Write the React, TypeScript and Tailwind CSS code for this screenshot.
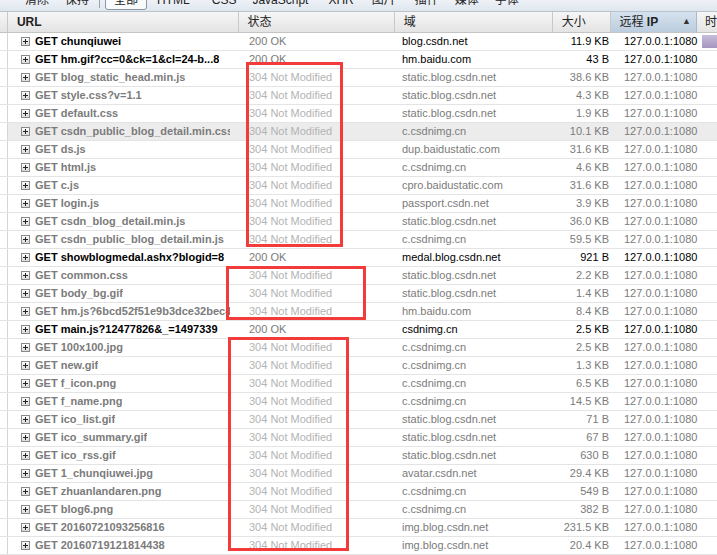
import React from "react"

type Row = { url: string; status: string; domain: string; size: string; cached: boolean; hover?: boolean; bar?: boolean }

const R304 = "304 Not Modified"

const ROWS: Row[] = [
  { url: "GET chunqiuwei", status: "200 OK", domain: "blog.csdn.net", size: "11.9 KB", cached: false, bar: true },
  { url: "GET hm.gif?cc=0&ck=1&cl=24-b...8", status: "200 OK", domain: "hm.baidu.com", size: "43 B", cached: false },
  { url: "GET blog_static_head.min.js", status: R304, domain: "static.blog.csdn.net", size: "38.6 KB", cached: true },
  { url: "GET style.css?v=1.1", status: R304, domain: "static.blog.csdn.net", size: "4.3 KB", cached: true },
  { url: "GET default.css", status: R304, domain: "static.blog.csdn.net", size: "1.9 KB", cached: true },
  { url: "GET csdn_public_blog_detail.min.css", status: R304, domain: "c.csdnimg.cn", size: "10.1 KB", cached: true, hover: true },
  { url: "GET ds.js", status: R304, domain: "dup.baidustatic.com", size: "31.6 KB", cached: true },
  { url: "GET html.js", status: R304, domain: "c.csdnimg.cn", size: "4.6 KB", cached: true },
  { url: "GET c.js", status: R304, domain: "cpro.baidustatic.com", size: "31.6 KB", cached: true },
  { url: "GET login.js", status: R304, domain: "passport.csdn.net", size: "3.9 KB", cached: true },
  { url: "GET csdn_blog_detail.min.js", status: R304, domain: "static.blog.csdn.net", size: "36.0 KB", cached: true },
  { url: "GET csdn_public_blog_detail.min.js", status: R304, domain: "c.csdnimg.cn", size: "59.5 KB", cached: true },
  { url: "GET showblogmedal.ashx?blogid=8", status: "200 OK", domain: "medal.blog.csdn.net", size: "921 B", cached: false },
  { url: "GET common.css", status: R304, domain: "static.blog.csdn.net", size: "2.2 KB", cached: true },
  { url: "GET body_bg.gif", status: R304, domain: "static.blog.csdn.net", size: "1.4 KB", cached: true },
  { url: "GET hm.js?6bcd52f51e9b3dce32bec4", status: R304, domain: "hm.baidu.com", size: "8.4 KB", cached: true },
  { url: "GET main.js?12477826&_=1497339", status: "200 OK", domain: "csdnimg.cn", size: "2.5 KB", cached: false },
  { url: "GET 100x100.jpg", status: R304, domain: "c.csdnimg.cn", size: "2.5 KB", cached: true },
  { url: "GET new.gif", status: R304, domain: "c.csdnimg.cn", size: "1.3 KB", cached: true },
  { url: "GET f_icon.png", status: R304, domain: "c.csdnimg.cn", size: "6.5 KB", cached: true },
  { url: "GET f_name.png", status: R304, domain: "c.csdnimg.cn", size: "14.5 KB", cached: true },
  { url: "GET ico_list.gif", status: R304, domain: "static.blog.csdn.net", size: "71 B", cached: true },
  { url: "GET ico_summary.gif", status: R304, domain: "static.blog.csdn.net", size: "67 B", cached: true },
  { url: "GET ico_rss.gif", status: R304, domain: "static.blog.csdn.net", size: "630 B", cached: true },
  { url: "GET 1_chunqiuwei.jpg", status: R304, domain: "avatar.csdn.net", size: "29.4 KB", cached: true },
  { url: "GET zhuanlandaren.png", status: R304, domain: "c.csdnimg.cn", size: "549 B", cached: true },
  { url: "GET blog6.png", status: R304, domain: "c.csdnimg.cn", size: "382 B", cached: true },
  { url: "GET 20160721093256816", status: R304, domain: "img.blog.csdn.net", size: "231.5 KB", cached: true },
  { url: "GET 20160719121814438", status: R304, domain: "img.blog.csdn.net", size: "20.4 KB", cached: true },
]

// filter tabs after the "全部" button, with their left gaps
const FILTERS = [
  { label: "HTML", cls: "ml-[10px]" },
  { label: "CSS", cls: "ml-[22px]" },
  { label: "JavaScript", cls: "ml-[16px]" },
  { label: "XHR", cls: "ml-[20px]" },
  { label: "图片", cls: "ml-[18px]" },
  { label: "插件", cls: "ml-[19px]" },
  { label: "媒体", cls: "ml-[16px]" },
  { label: "字体", cls: "ml-[16px]" },
]

/* little expand box in front of each request */
function PlusBox() {
  return (
    <svg width="9" height="9" viewBox="0 0 9 9" className="shrink-0" aria-hidden>
      <defs>
        <linearGradient id="pb" x1="0" y1="0" x2="0" y2="1">
          <stop offset="0" stopColor="#ffffff" />
          <stop offset="1" stopColor="#d8d8d8" />
        </linearGradient>
      </defs>
      <rect x="0.5" y="0.5" width="8" height="8" fill="url(#pb)" stroke="#8a8a8a" />
      <path d="M2 4.5h5M4.5 2v5" stroke="#222" strokeWidth="1" />
    </svg>
  )
}

export default function App() {
  return (
    <div className="relative w-[717px] h-[555px] overflow-hidden bg-white font-['Liberation_Sans','Noto_Sans_CJK_SC',sans-serif] text-[11px]">
      {/* Toolbar — cut off at the top */}
      <div className="h-[12px] overflow-hidden border-b border-[#b9c3cf] bg-gradient-to-b from-[#eef2f7] to-[#dfe6ee]">
        <div className="-mt-[10px] flex items-center h-[20px] text-[12px] text-[#222]">
          <span className="ml-[25px]">清除</span>
          <span className="ml-[16px]">保持</span>
          <span className="ml-[10px] h-[16px] w-px bg-[#9aa4b0]" />
          <span className="ml-[5px] px-[8px] h-[19px] flex items-center border border-[#8c96a2] rounded-[3px] bg-[#f8fafc]">全部</span>
          {FILTERS.map((f) => (
            <span key={f.label} className={f.cls}>{f.label}</span>
          ))}
        </div>
      </div>

      {/* Column header */}
      <div className="flex h-[21px] border-b border-[#c4c4c4] bg-gradient-to-b from-[#f6f6f6] to-[#e4e4e4] text-[12px] text-[#222]">
        <div className="w-[8px] border-r border-[#c8c8c8]" />
        <div className="w-[232px] pl-[9px] flex items-center font-bold border-r border-[#c8c8c8]">URL</div>
        <div className="w-[157px] pl-[9px] flex items-center border-r border-[#c8c8c8]">状态</div>
        <div className="w-[159px] pl-[9px] flex items-center border-r border-[#c8c8c8]">域</div>
        <div className="w-[59px] pl-[9px] flex items-center border-r border-[#c8c8c8]">大小</div>
        <div className="w-[86px] pl-[8px] pr-[5px] flex items-center justify-between border-r border-[#a9b9cb] bg-gradient-to-b from-[#d6e2ee] to-[#bccdde]">
          <span>远程 <b>IP</b></span>
          <span className="text-[9px] text-[#333]">▲</span>
        </div>
        <div className="flex-1 pl-[8px] flex items-center">时</div>
      </div>

      {/* Requests */}
      {ROWS.map((r, i) => {
        const main = r.cached ? "text-[#7b7b7b]" : "text-black"
        return (
          <div key={i} className={`flex h-[18px] border-b border-[#e4e4e4] ${r.hover ? "bg-[#ececec]" : ""}`}>
            <div className="w-[8px] border-r border-[#d4d4d4] bg-white" />
            <div className="w-[232px] pl-[13px] pr-[10px] flex items-center overflow-hidden">
              <div className={`min-w-0 flex items-center gap-[5px] overflow-hidden whitespace-nowrap font-bold ${main}`}>
                <PlusBox />
                <span>{r.url}</span>
              </div>
            </div>
            <div className={`w-[158px] pl-[9px] flex items-center whitespace-nowrap ${r.cached ? "text-[#b3b3b3]" : "text-[#7b7b7b]"}`}>{r.status}</div>
            <div className={`w-[159px] pl-[4px] flex items-center whitespace-nowrap ${main}`}>{r.domain}</div>
            <div className={`w-[59px] pr-[7px] flex items-center justify-end whitespace-nowrap ${main}`}>{r.size}</div>
            <div className={`w-[86px] pl-[8px] flex items-center whitespace-nowrap ${main}`}>127.0.0.1:1080</div>
            <div className="flex-1 flex items-center">
              {r.bar && <div className="w-full h-[13px] bg-gradient-to-b from-[#c7bcdb] to-[#a596bf]" />}
            </div>
          </div>
        )
      })}

      {/* Red annotation boxes drawn over the panel */}
      <div className="absolute left-[246px] top-[62px] w-[97px] h-[185px] border-[3px] border-[#f23b3b]" />
      <div className="absolute left-[226px] top-[266px] w-[140px] h-[54px] border-[3px] border-[#f23b3b]" />
      <div className="absolute left-[228px] top-[337px] w-[121px] h-[214px] border-[3px] border-[#f23b3b]" />
    </div>
  )
}
